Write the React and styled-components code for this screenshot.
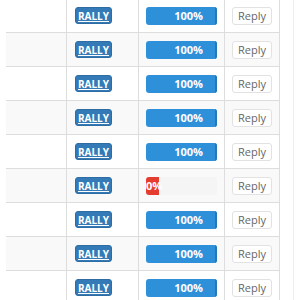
import React from "react";
import styled, { createGlobalStyle } from "styled-components";

const Global = createGlobalStyle`
  html, body { margin: 0; padding: 0; background: #fff; }
  body { font-family: "Open Sans", "Liberation Sans", sans-serif; overflow: hidden; }
`;

const Panel = styled.div`
  box-sizing: border-box;
  width: 294px;
  padding: 0 13px 0 6px;
  border-right: 1px solid #eeeeee;
  margin-top: -1px;
`;

const Row = styled.div`
  display: flex;
  height: 34px;
  box-sizing: border-box;
  border-bottom: 1px solid #dddddd;
  background: ${(p) => (p.$striped ? "#f9f9f9" : "#ffffff")};
`;

const Cell = styled.div`
  box-sizing: border-box;
  width: ${(p) => p.$w}px;
  display: flex;
  align-items: center;
  padding-left: ${(p) => p.$pl || 0}px;
  border-left: ${(p) => (p.$first ? "none" : "1px solid #dddddd")};
  border-right: ${(p) => (p.$last ? "1px solid #dddddd" : "none")};
`;

const Badge = styled.span`
  box-sizing: border-box;
  width: 37px;
  height: 17px;
  display: flex;
  align-items: center;
  justify-content: center;
  background: #337ab7;
  border: 1px solid #2e6da4;
  border-radius: 3px;
  color: #fff;
  font-size: 10px;
  font-weight: 700;
  text-decoration: underline;
  text-underline-offset: 1px;
`;

const Track = styled.div`
  width: 71px;
  height: 18px;
  background: #f5f5f5;
  border-radius: 3px;
  overflow: hidden;
  display: flex;
`;

const Bar = styled.div`
  box-sizing: border-box;
  height: 100%;
  width: ${(p) => p.$w};
  background: ${(p) => (p.$red ? "#e53c30" : "#2f90da")};
  border-right: ${(p) => (p.$red ? "none" : "2px solid #2577b8")};
  display: flex;
  align-items: center;
  justify-content: ${(p) => (p.$red ? "flex-start" : "flex-end")};
  padding-right: ${(p) => (p.$red ? 0 : 12)}px;
  color: #fff;
  font-size: 11px;
  font-weight: 700;
  white-space: nowrap;
  overflow: visible;
`;

const ReplyButton = styled.button`
  box-sizing: border-box;
  width: 40px;
  height: 18px;
  padding: 0;
  background: #fff;
  border: 1px solid #e2e2e2;
  border-radius: 3px;
  color: #666;
  font-family: "Open Sans", "Liberation Sans", sans-serif;
  font-size: 11px;
  line-height: 16px;
`;

const rows = [100, 100, 100, 100, 100, 0, 100, 100, 100];

export default function App() {
  return (
    <>
      <Global />
      <Panel>
        {rows.map((v, i) => (
          <Row key={i} $striped={i % 2 === 1}>
            <Cell $w={60} $first />
            <Cell $w={72} $pl={8}>
              <Badge>RALLY</Badge>
            </Cell>
            <Cell $w={86} $pl={7}>
              <Track>
                {v === 0 ? (
                  <Bar $w="13px" $red>0%</Bar>
                ) : (
                  <Bar $w="100%">100%</Bar>
                )}
              </Track>
            </Cell>
            <Cell $w={56} $pl={7} $last>
              <ReplyButton>Reply</ReplyButton>
            </Cell>
          </Row>
        ))}
      </Panel>
    </>
  );
}
